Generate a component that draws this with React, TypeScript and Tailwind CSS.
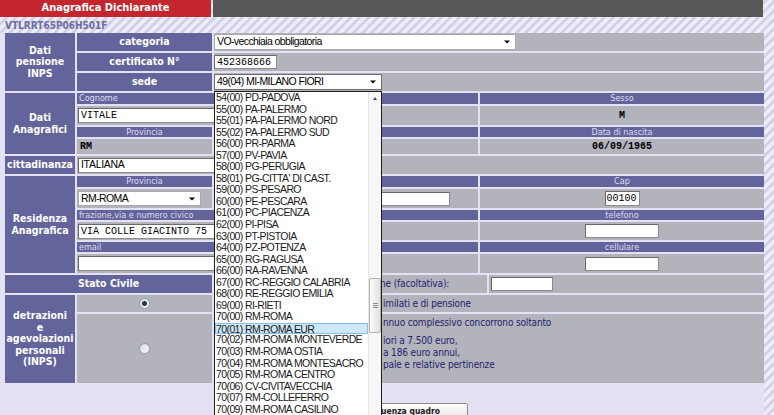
import React from 'react';

const SEDI = [
  '54(00) PD-PADOVA',
  '55(00) PA-PALERMO',
  '55(01) PA-PALERMO NORD',
  '55(02) PA-PALERMO SUD',
  '56(00) PR-PARMA',
  '57(00) PV-PAVIA',
  '58(00) PG-PERUGIA',
  "58(01) PG-CITTA' DI CAST.",
  '59(00) PS-PESARO',
  '60(00) PE-PESCARA',
  '61(00) PC-PIACENZA',
  '62(00) PI-PISA',
  '63(00) PT-PISTOIA',
  '64(00) PZ-POTENZA',
  '65(00) RG-RAGUSA',
  '66(00) RA-RAVENNA',
  '67(00) RC-REGGIO CALABRIA',
  '68(00) RE-REGGIO EMILIA',
  '69(00) RI-RIETI',
  '70(00) RM-ROMA',
  '70(01) RM-ROMA EUR',
  '70(02) RM-ROMA MONTEVERDE',
  '70(03) RM-ROMA OSTIA',
  '70(04) RM-ROMA MONTESACRO',
  '70(05) RM-ROMA CENTRO',
  '70(06) CV-CIVITAVECCHIA',
  '70(07) RM-COLLEFERRO',
  '70(09) RM-ROMA CASILINO',
  '70(10) RM-ROMA TUSCOLANO',
];

const LABEL = "font-['DejaVu_Sans_Condensed','Liberation_Sans',sans-serif]";
const MONO = "font-['Liberation_Mono',monospace]";
const ARIAL = "font-['Liberation_Sans',Arial,sans-serif]";
const HEAD = 'bg-[#64649c] text-white';
const CELL = 'bg-[#b3b3bb]';
const SUB = 'bg-[#64649c] text-[#dcdcf0] text-[9px] leading-[10px]';
const TEXT = 'text-[10px] leading-[12px] tracking-[-0.15px] text-[#232370]';

function Field({ value = '', className = '', mono = false }: { value?: string; className?: string; mono?: boolean }) {
  return (
    <input
      readOnly
      value={value}
      className={`border border-[#8c8c8c] border-l-[#6a6a6a] border-t-[#6a6a6a] bg-white text-black outline-none ${
        mono ? `${MONO} text-[10px]` : `${ARIAL} text-[10.5px] tracking-[-0.3px]`
      } ${className}`}
    />
  );
}

function Select({ value, className = '', focus = false }: { value: string; className?: string; focus?: boolean }) {
  return (
    <div
      className={`relative flex items-center whitespace-nowrap border bg-white pl-[2px] text-black ${ARIAL} text-[10.5px] tracking-[-0.6px] ${
        focus ? 'border-[#6d6d6d]' : 'border-[#a8a8a8]'
      } ${className}`}
    >
      {value}
      <span className="absolute right-[5px] top-1/2 -translate-y-1/2 border-x-[3px] border-t-[3px] border-x-transparent border-t-black" />
    </div>
  );
}

function Radio({ checked = false }: { checked?: boolean }) {
  return (
    <span className="flex h-[11px] w-[11px] items-center justify-center rounded-full border border-[#8da0b6] bg-[linear-gradient(135deg,#d6d6d6,#ffffff)]">
      {checked && <span className="h-[5px] w-[5px] rounded-full bg-[#26384e]" />}
    </span>
  );
}

function Section({ title, children }: { title: React.ReactNode; children: React.ReactNode }) {
  return (
    <div className="flex gap-[2px]">
      <div className={`${HEAD} flex w-[70px] shrink-0 items-center justify-center text-center text-[10.5px] font-bold leading-[11.5px]`}>
        {title}
      </div>
      <div className="flex flex-1 flex-col gap-[2px]">{children}</div>
    </div>
  );
}

function Row({ label, children, cellClass = '' }: { label: string; children: React.ReactNode; cellClass?: string }) {
  return (
    <div className="grid h-[18px] grid-cols-[135px_1fr] gap-[2px]">
      <div className={`${HEAD} flex items-center justify-center text-[10.5px] font-bold`}>{label}</div>
      <div className={`${CELL} flex items-center ${cellClass}`}>{children}</div>
    </div>
  );
}

// part of each line sits under the open list; the rest starts right after it
function Cut({ hidden, shown }: { hidden: string; shown: string }) {
  return (
    <div className="flex whitespace-nowrap">
      <span className="w-[166px] shrink-0 overflow-hidden">{hidden}</span>
      <span>{shown}</span>
    </div>
  );
}

function SedeList() {
  return (
    <div className="absolute left-0 top-full z-10 flex h-[340px] w-[168px] border border-[#1c1c1c] bg-white">
      <div className={`flex-1 overflow-hidden ${ARIAL} text-[10.5px] leading-[11.55px] tracking-[-0.6px] text-[#1a1a1a]`}>
        {SEDI.map((s) => (
          <div
            key={s}
            className={
              s === '70(01) RM-ROMA EUR'
                ? 'h-[11.55px] whitespace-nowrap border border-[#86bde6] bg-[#cde8f8] pl-0'
                : 'h-[11.55px] whitespace-nowrap pl-px'
            }
          >
            {s}
          </div>
        ))}
      </div>
      <div className="relative w-[13px] shrink-0 border-l border-[#e4e4e4] bg-[#f7f7f7]">
        <div className="flex h-[12px] items-center justify-center">
          <span className="border-x-[2.5px] border-b-[3px] border-x-transparent border-b-[#4a4a4a]" />
        </div>
        <div className="absolute left-0 right-0 top-[186px] flex h-[55px] items-center justify-center rounded-[2px] border border-[#b5b5b5] bg-[linear-gradient(90deg,#fbfbfb,#e2e2e2)]">
          <div className="flex flex-col gap-px">
            <span className="h-px w-[5px] bg-[#8a8a8a]" />
            <span className="h-px w-[5px] bg-[#8a8a8a]" />
            <span className="h-px w-[5px] bg-[#8a8a8a]" />
          </div>
        </div>
      </div>
    </div>
  );
}

export default function App() {
  return (
    <div
      className={`h-[415px] w-[774px] overflow-hidden bg-[image:repeating-linear-gradient(135deg,#eeeefa_0px,#eeeefa_2.5px,#cfcfe5_3.5px,#cfcfe5_5px,#eeeefa_6.4px)] ${LABEL}`}
    >
      <div className="flex h-[17px] gap-[2px]">
        <div className="flex w-[211px] items-center justify-center bg-[#c4262e] text-[11px] font-bold text-white">
          Anagrafica Dichiarante
        </div>
        <div className="w-[550px] bg-[#575757]" />
      </div>
      <div className="flex h-[16px] items-center pl-[5px] text-[10px] font-bold text-[#6c6ca4]">VTLRRT65P06H501F</div>

      <div className="h-[382px] w-[764px] bg-[#e2e2f4] pl-[5px]">
        <div className="flex flex-col gap-[2px]">
          <Section title={<>Dati<br />pensione<br />INPS</>}>
            <Row label="categoria">
              <Select value="VO-vecchiaia obbligatoria" className="h-[16px] w-[302px]" />
            </Row>
            <Row label="certificato N°">
              <Field mono value="452368666" className="h-[14px] w-[63px] px-[2px]" />
            </Row>
            <Row label="sede" cellClass="relative">
              <Select focus value="49(04) MI-MILANO FIORI" className="h-[16px] w-[168px]" />
              <SedeList />
            </Row>
          </Section>

          <Section title={<>Dati<br />Anagrafici</>}>
            <div className="grid h-[11px] grid-cols-[219px_180px_1fr] gap-[2px]">
              <div className={`${SUB} pl-[2px]`}>Cognome</div>
              <div className={SUB} />
              <div className={`${SUB} text-center`}>Sesso</div>
            </div>
            <div className="grid h-[19px] grid-cols-[219px_180px_1fr] gap-[2px]">
              <div className={`${CELL} flex items-center pl-px`}>
                <Field mono value="VITALE" className="h-[15px] w-[212px] px-[2px]" />
              </div>
              <div className={CELL} />
              <div className={`${CELL} flex items-center justify-center ${MONO} text-[10px] font-bold text-black`}>M</div>
            </div>
            <div className="grid h-[10px] grid-cols-[135px_264px_1fr] gap-[2px]">
              <div className={`${SUB} text-center`}>Provincia</div>
              <div className={SUB} />
              <div className={`${SUB} text-center`}>Data di nascita</div>
            </div>
            <div className="grid h-[15px] grid-cols-[135px_264px_1fr] gap-[2px]">
              <div className={`${CELL} flex items-center pl-[3px] ${MONO} text-[10px] font-bold text-black`}>RM</div>
              <div className={CELL} />
              <div className={`${CELL} flex items-center justify-center ${MONO} text-[10px] font-bold text-black`}>06/09/1965</div>
            </div>
          </Section>

          <Section title="cittadinanza">
            <div className={`${CELL} flex h-[18px] items-center pl-px`}>
              <Field value="ITALIANA" className="h-[15px] w-[240px] px-[2px]" />
            </div>
          </Section>

          <Section title={<>Residenza<br />Anagrafica</>}>
            <div className="grid h-[11px] grid-cols-[135px_264px_1fr] gap-[2px]">
              <div className={`${SUB} text-center`}>Provincia</div>
              <div className={SUB} />
              <div className={`${SUB} text-center`}>Cap</div>
            </div>
            <div className="grid h-[19px] grid-cols-[135px_264px_1fr] gap-[2px]">
              <div className={`${CELL} flex items-center pl-px`}>
                <Select value="RM-ROMA" className="h-[15px] w-[123px]" />
              </div>
              <div className={`${CELL} flex items-center`}>
                <Field className="h-[14px] w-[236px]" />
              </div>
              <div className={`${CELL} flex items-center justify-center`}>
                <Field mono value="00100" className="h-[15px] w-[35px] px-px" />
              </div>
            </div>
            <div className="grid h-[10px] grid-cols-[401px_1fr] gap-[2px]">
              <div className={`${SUB} pl-[2px]`}>frazione,via e numero civico</div>
              <div className={`${SUB} text-center`}>telefono</div>
            </div>
            <div className="grid h-[18px] grid-cols-[401px_1fr] gap-[2px]">
              <div className={`${CELL} flex items-center pl-px`}>
                <Field mono value="VIA COLLE GIACINTO 75" className="h-[15px] w-[240px] px-[2px]" />
              </div>
              <div className={`${CELL} flex items-center justify-center`}>
                <Field className="h-[14px] w-[74px]" />
              </div>
            </div>
            <div className="grid h-[10px] grid-cols-[401px_1fr] gap-[2px]">
              <div className={`${SUB} pl-[2px]`}>email</div>
              <div className={`${SUB} text-center`}>cellulare</div>
            </div>
            <div className="grid h-[19px] grid-cols-[401px_1fr] gap-[2px]">
              <div className={`${CELL} flex items-center pl-px`}>
                <Field className="h-[15px] w-[240px]" />
              </div>
              <div className={`${CELL} flex items-center justify-center`}>
                <Field className="h-[14px] w-[74px]" />
              </div>
            </div>
          </Section>

          <div className="grid h-[18px] grid-cols-[207px_273px_1fr] gap-[2px]">
            <div className={`${HEAD} flex items-center justify-center text-[10.5px] font-bold`}>Stato Civile</div>
            <div className={`${CELL} ${TEXT} flex items-center`}>
              <Cut hidden="Professio" shown="ne (facoltativa):" />
            </div>
            <div className={`${CELL} flex items-center pl-[2px]`}>
              <Field className="h-[14px] w-[62px]" />
            </div>
          </div>

          <Section title={<>detrazioni<br />e<br />agevolazioni<br />personali<br />(INPS)</>}>
            <div className="grid h-[17px] grid-cols-[135px_1fr] gap-[2px]">
              <div className={`${CELL} flex items-center justify-center`}>
                <Radio checked />
              </div>
              <div className={`${CELL} ${TEXT} flex items-center pl-[3px]`}>
                <Cut hidden="Redditi di lavoro dipendente e ass" shown="imilati e di pensione" />
              </div>
            </div>
            <div className="grid h-[69px] grid-cols-[135px_1fr] gap-[2px]">
              <div className={`${CELL} flex items-center justify-center`}>
                <Radio />
              </div>
              <div className={`${CELL} ${TEXT} pl-[3px] pt-[3px]`}>
                <Cut hidden="Ai fini del reddito a" shown="nnuo complessivo concorrono soltanto" />
                <div className="mt-[6px]">
                  <Cut hidden="- pensioni non super" shown="iori a 7.500 euro," />
                  <Cut hidden="- terreni fino" shown="a 186 euro annui," />
                  <Cut hidden="- abitazione princi" shown="pale e relative pertinenze" />
                </div>
              </div>
            </div>
          </Section>
        </div>

        <div className="mt-[20px] flex w-[463px] justify-end">
          <button className="h-[17px] rounded-[2px] border border-[#8b8b8b] bg-[linear-gradient(#fdfdfd,#e4e4e4)] px-[27px] text-[8.5px] font-bold text-[#1c1c1c]">
            Verifica congruenza quadro
          </button>
        </div>
      </div>
    </div>
  );
}
